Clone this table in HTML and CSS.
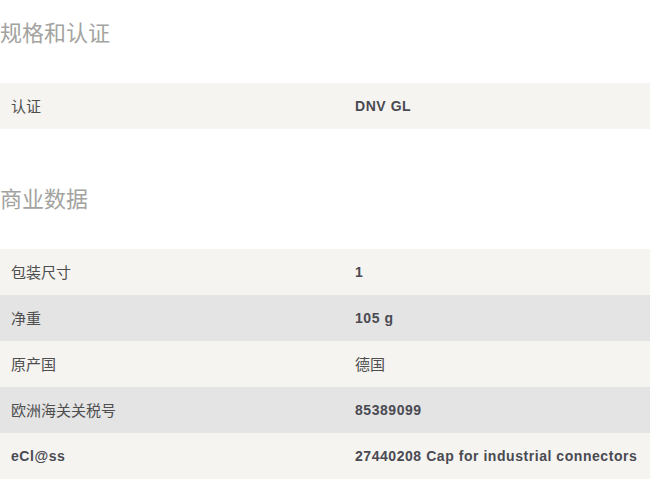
FILE: index.html
```html
<!DOCTYPE html>
<html lang="zh">
<head>
<meta charset="utf-8">
<link rel="stylesheet" href="styles.css">
</head>
<body>
<section class="section first">
  <h2 class="title">规格和认证</h2>
  <div class="table">
    <div class="row light"><div class="cell label">认证</div><div class="cell value">DNV GL</div></div>
  </div>
</section>
<section class="section">
  <h2 class="title">商业数据</h2>
  <div class="table">
    <div class="row light"><div class="cell label">包装尺寸</div><div class="cell value">1</div></div>
    <div class="row dark"><div class="cell label">净重</div><div class="cell value">105 g</div></div>
    <div class="row light"><div class="cell label">原产国</div><div class="cell value cjk">德国</div></div>
    <div class="row dark"><div class="cell label">欧洲海关关税号</div><div class="cell value">85389099</div></div>
    <div class="row light"><div class="cell label latin">eCl@ss</div><div class="cell value">27440208 Cap for industrial connectors</div></div>
  </div>
</section>
</body>
</html>
```
FILE: styles.css
```css
html, body {
  margin: 0;
  padding: 0;
  background: #ffffff;
}
body {
  font-family: "Liberation Sans", "Noto Sans CJK SC", sans-serif;
}
.section {
  padding-top: 53px;
}
.section.first {
  padding-top: 16px;
}
.title {
  margin: 0 0 37px 0;
  font-family: "Noto Sans CJK SC", sans-serif;
  font-weight: 400;
  font-size: 22px;
  line-height: 30px;
  color: #a3a39f;
}
.table {
  display: flex;
  flex-direction: column;
}
.row {
  display: grid;
  grid-template-columns: 344px 1fr;
  height: 46px;
  align-items: center;
}
.row.light {
  background: #f5f4f1;
}
.row.dark {
  background: #e4e4e4;
}
.cell {
  padding-left: 11px;
  font-size: 15px;
  line-height: 20px;
}
.label {
  font-family: "Noto Sans CJK SC", sans-serif;
  color: #4e4e4e;
}
.label.latin, .value {
  font-family: "Liberation Sans", "Noto Sans CJK SC", sans-serif;
  font-weight: 700;
  font-size: 14px;
  letter-spacing: 0.55px;
  color: #4a4a52;
}
.value.cjk {
  font-family: "Noto Sans CJK SC", sans-serif;
  font-weight: 400;
  font-size: 15px;
  letter-spacing: 0;
  color: #4e4e4e;
}
```
